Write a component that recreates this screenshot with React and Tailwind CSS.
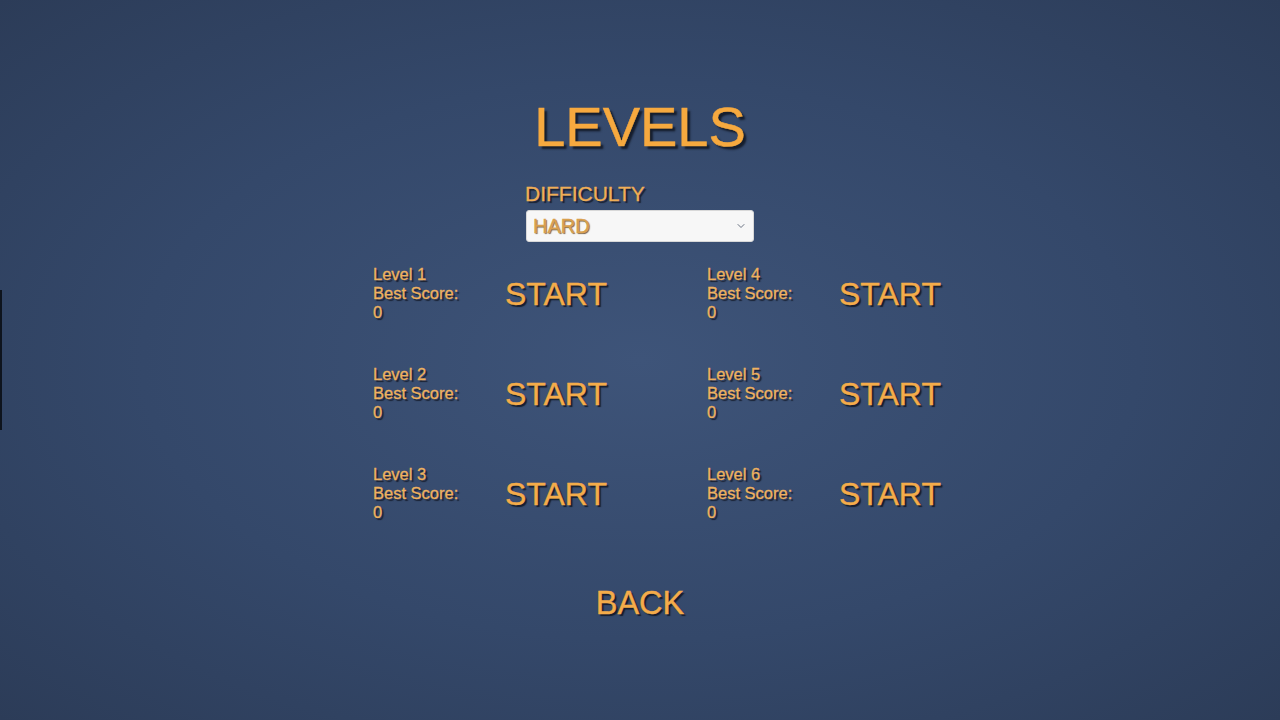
import { ChevronDown } from "lucide-react";

const NIVELES = [
  [1, 4],
  [2, 5],
  [3, 6],
];

const sombra = "[text-shadow:2px_2px_1px_rgba(18,24,38,0.85)]";

function Nivel({ n }) {
  return (
    <div className="flex items-center">
      <div className={`w-[132px] text-[16.5px] leading-[19px] text-[#efb25e] [-webkit-text-stroke:0.3px_#efb25e] ${sombra}`}>
        <p>Level {n}</p>
        <p>Best Score:</p>
        <p>0</p>
      </div>
      <button className="text-[32px] leading-none text-[#f4ac4a] [-webkit-text-stroke:0.4px_#f4ac4a] [text-shadow:2px_2px_1px_rgba(18,24,38,0.9)]">
        START
      </button>
    </div>
  );
}

export default function App() {
  return (
    <div className="relative min-h-screen h-[720px] overflow-hidden font-['Liberation_Sans',Arial,sans-serif] bg-[radial-gradient(ellipse_at_center,#3e5479_0%,#34486a_55%,#2c3c58_100%)]">
      <div className="absolute left-0 top-[290px] h-[140px] w-[2px] bg-black/70" />

      <div className="flex flex-col items-center pt-[99px]">
        <h1 className="text-[56px] leading-none text-[#f6a93f] [-webkit-text-stroke:0.5px_#f6a93f] [text-shadow:3px_3px_2px_rgba(18,24,38,0.9)]">
          LEVELS
        </h1>

        <div className="mt-[28px] w-[230px]">
          <p className={`text-[21px] leading-none text-[#f0ae55] [-webkit-text-stroke:0.3px_#f0ae55] ${sombra}`}>DIFFICULTY</p>
          <div className="ml-[1px] mt-[6px] flex h-[32px] w-[228px] items-center justify-between rounded-[3px] border border-[#d8d8d8] bg-[#f7f7f7] pl-[6px] pr-[6px]">
            <span className="text-[20px] leading-none text-[#d9a04e] [-webkit-text-stroke:0.3px_#d9a04e] [text-shadow:1px_1px_1px_rgba(70,45,15,0.75)]">
              HARD
            </span>
            <ChevronDown className="h-3 w-3 text-gray-500" strokeWidth={2} />
          </div>
        </div>

        <div className="mt-[23px] flex justify-center pl-[34px]">
          <div className="grid w-[568px] grid-cols-[334px_234px] gap-y-[43px]">
            {NIVELES.map(([a, b]) => (
              <div key={a} className="contents">
                <Nivel n={a} />
                <Nivel n={b} />
              </div>
            ))}
          </div>
        </div>

        <button className="mt-[65px] text-[32.5px] leading-none text-[#f4ac4a] [-webkit-text-stroke:0.4px_#f4ac4a] [text-shadow:2px_2px_1px_rgba(18,24,38,0.9)]">
          BACK
        </button>
      </div>
    </div>
  );
}
